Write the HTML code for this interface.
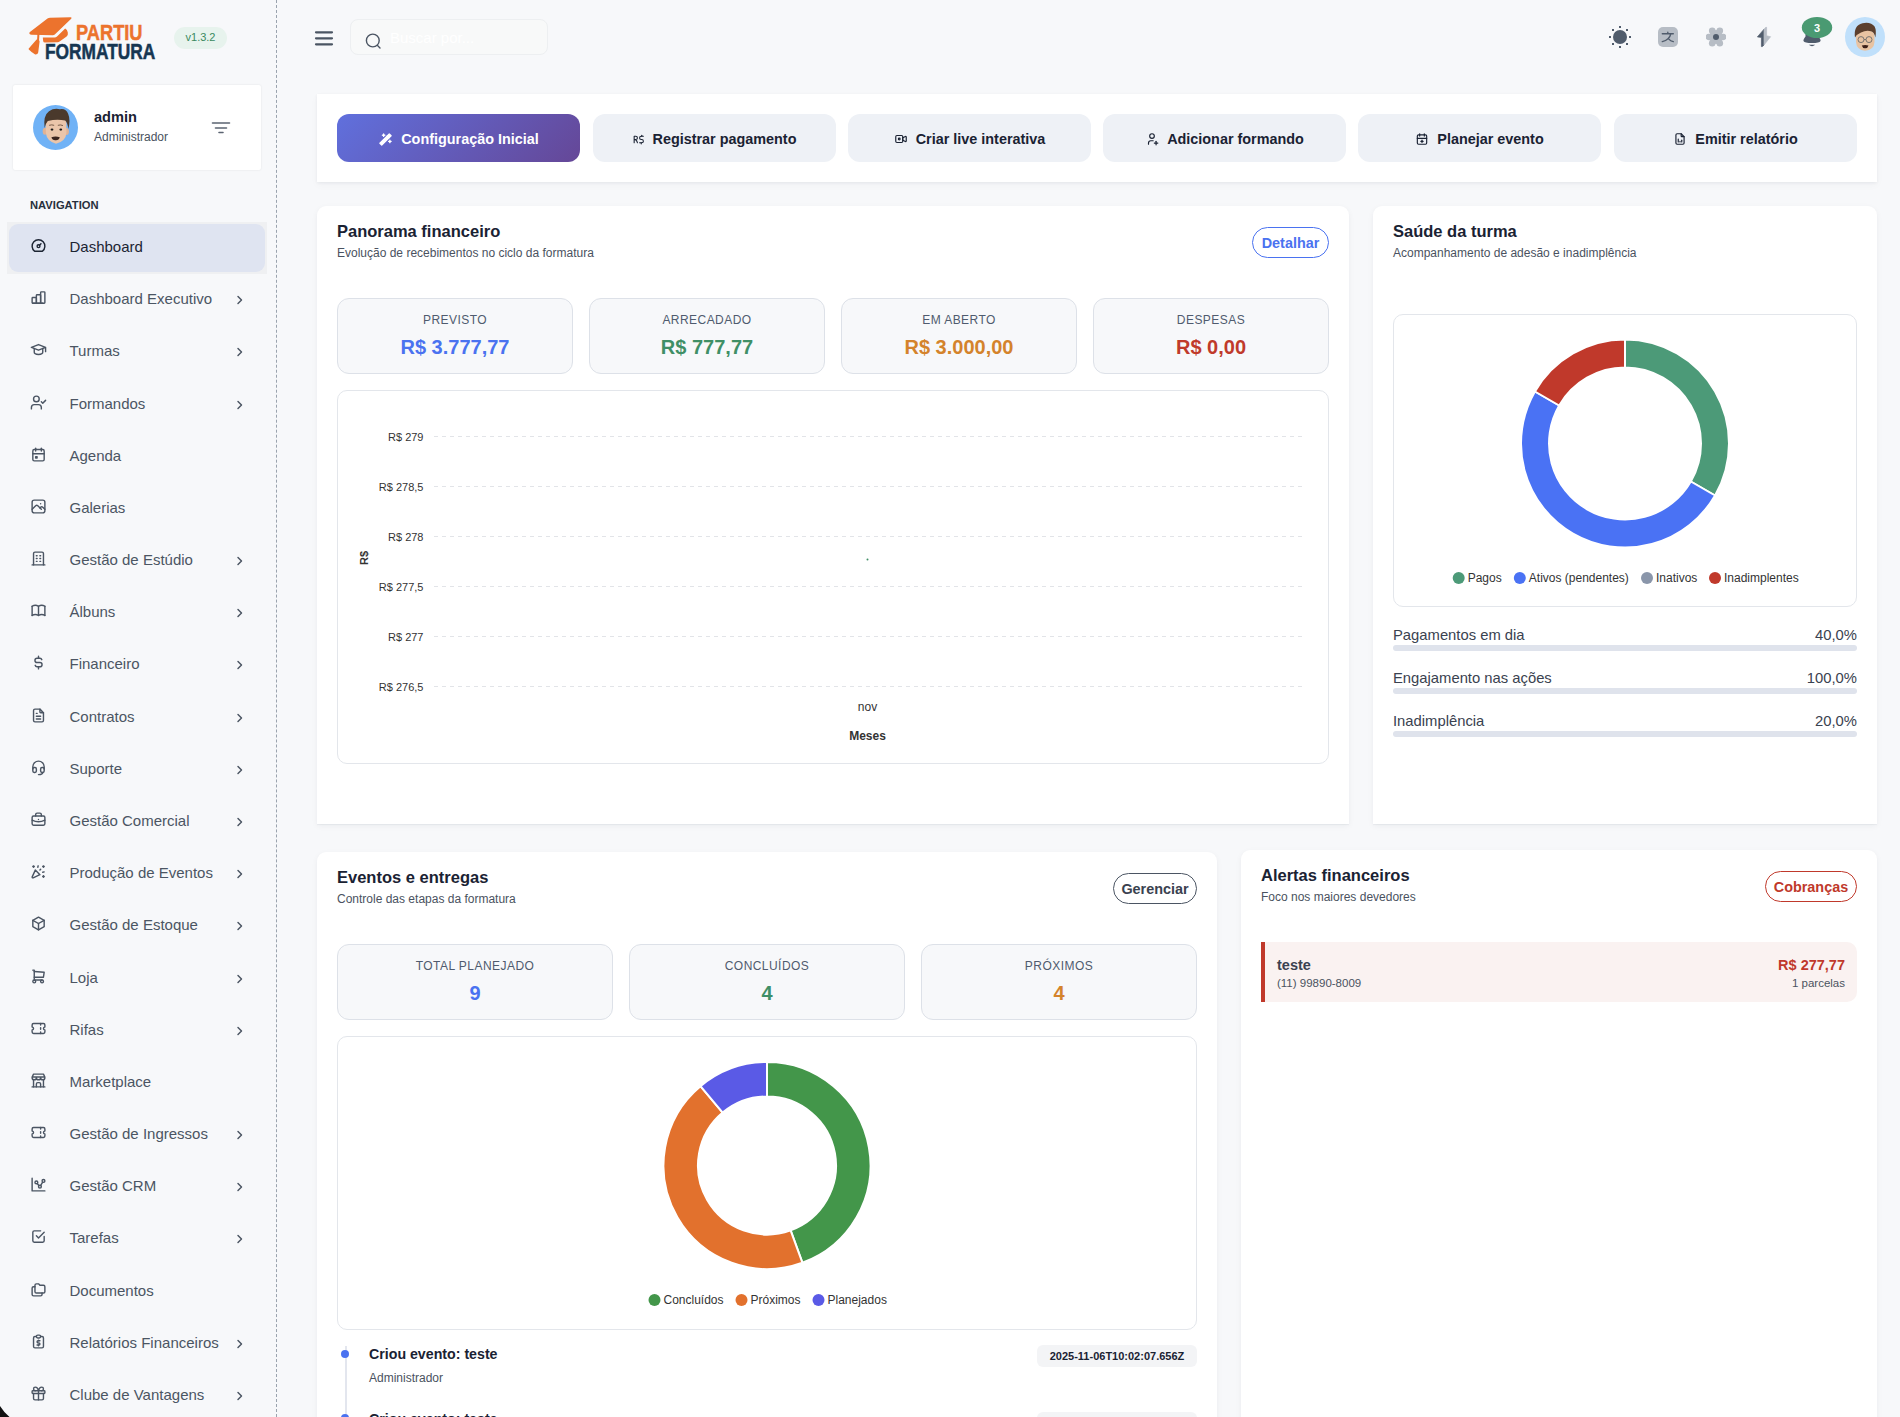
<!DOCTYPE html>
<html lang="pt-BR">
<head>
<meta charset="utf-8">
<title>Partiu Formatura - Dashboard</title>
<style>
*{box-sizing:border-box;margin:0;padding:0}
html,body{width:1900px;height:1417px;overflow:hidden}
body{background:#f7f8fa;font-family:"Liberation Sans",sans-serif;color:#1c2433;position:relative}
.abs{position:absolute}
svg.ic{fill:none;stroke:currentColor;stroke-width:2;stroke-linecap:round;stroke-linejoin:round}
/* sidebar */
#sidebar{position:absolute;left:0;top:0;width:277px;height:1417px;border-right:1px dashed #9aa3ae}
.nav{position:absolute;left:9px;width:256px;height:48px;border-radius:9px;color:#4b5563}
.nav.active{background:#dfe4f1;color:#1c2433}
.nav svg{position:absolute;left:21px;top:13px;width:17px;height:17px}
.nav .t{position:absolute;left:60.5px;top:13px;font-size:15px;line-height:20px;white-space:nowrap}
.nav .chev{position:absolute;left:226px;top:19px;width:10px;height:10px;stroke-width:1.45}
/* cards */
.card{position:absolute;background:#fff;border-radius:9px 9px 0 0;box-shadow:0 1px 1px rgba(20,30,50,.05),0 2px 6px rgba(20,30,50,.05)}
.ttl{position:absolute;font-size:16.5px;font-weight:bold;color:#1a2233;line-height:20px;white-space:nowrap}
.sub{position:absolute;font-size:12px;color:#4a5260;line-height:16px;white-space:nowrap}
.btn{position:absolute;top:20px;height:48px;width:243px;border-radius:12px;background:#eef1f6;color:#1a2233;font-weight:bold;font-size:14.4px;display:flex;align-items:center;justify-content:center;gap:8px;white-space:nowrap;padding-top:2px}
.btn svg{width:14px;height:14px}
.metric{position:absolute;background:#f7f8fa;border:1px solid #dde1e8;border-radius:12px;text-align:center}
.metric .lbl{position:absolute;left:0;right:0;top:13px;font-size:12px;letter-spacing:0.45px;color:#4f5b6e;line-height:16px}
.metric .val{position:absolute;left:0;right:0;top:36px;font-size:20px;font-weight:bold;line-height:24px}
.pill{position:absolute;border:1px solid;border-radius:16px;font-size:14.4px;font-weight:bold;display:flex;align-items:center;justify-content:center}
</style>
</head>
<body>

<!-- SIDEBAR -->
<div id="sidebar">
  <!-- logo -->
  <svg class="abs" style="left:20px;top:10px" width="150" height="55" viewBox="0 0 150 55">
    <path d="M9.6 22.2 L27.5 8.6 Q28.6 7.8 30 7.8 L50.6 7.3 Q52.4 7.4 51.2 8.8 L34.8 24.6 Q34 25.2 32.8 25.2 L11.6 24.8 Q8.6 24.4 9.6 22.2Z" fill="#ec732d"/>
    <path d="M22.8 27.4 L34.6 27.6 Q36 27.6 37 26.6 L45.2 18.6 Q47.4 19.6 47.8 22.4 L47.8 24.6 Q47.6 25.6 46.6 26.4 L39.6 31.6 Q38.8 32.2 37.6 32.2 L25 32.6 Q23.4 32.6 23.2 31.2Z" fill="#ec732d"/>
    <path d="M17.4 24 L19.4 24 L19 31 L17 31Z" fill="#ec732d"/>
    <path d="M16.6 29.6 Q19.4 29 19.6 31.6 L18.2 42.6 Q17.8 44.8 15.2 44.6 Q11 42 8.8 39.6 Q8.2 38.8 9.2 38Z" fill="#ec732d"/>
    <text x="56" y="29.8" font-family="Liberation Sans" font-weight="bold" font-size="22.7" fill="#ec732d" stroke="#ec732d" stroke-width="0.5" textLength="66.5" lengthAdjust="spacingAndGlyphs">PARTIU</text>
    <text x="25" y="48.9" font-family="Liberation Sans" font-weight="bold" font-size="21.2" fill="#163652" stroke="#163652" stroke-width="0.5" textLength="110.3" lengthAdjust="spacingAndGlyphs">FORMATURA</text>
  </svg>
  <div class="abs" style="left:174px;top:27px;width:53px;height:22px;border-radius:11px;background:#e7f3ed;color:#3a8a61;font-size:11px;line-height:20px;text-align:center">v1.3.2</div>

  <!-- user card -->
  <div class="abs" style="left:13px;top:85px;width:248px;height:85px;background:#fff;box-shadow:0 0 2px rgba(30,40,60,.12);border-radius:2px"></div>
  <svg class="abs" style="left:33px;top:105px" width="45" height="45" viewBox="0 0 45 45">
    <circle cx="22.5" cy="22.5" r="22.5" fill="#70b2f6"/>
    <ellipse cx="12" cy="26.2" rx="2.3" ry="3.5" fill="#e0b294"/>
    <ellipse cx="33.6" cy="26.6" rx="2.3" ry="3.5" fill="#e0b294"/>
    <path d="M12.6 18 Q12.6 13.8 17 13.8 L29 13.8 Q33.4 13.8 33.4 18 L33.4 28 Q33 36 23 38.8 Q13.6 36 12.9 28Z" fill="#eac5aa"/>
    <path d="M11.6 23 Q10 10.5 16 6.2 Q21 2.6 27 4.2 Q33 3.2 35.2 9 Q37.6 14.5 35.4 24 Q34.4 17.5 32.2 15.6 Q24 13.8 14.8 16 Q12.6 18.5 11.6 23Z" fill="#4a392c"/>
    <path d="M16.5 20.2 Q18.6 19.4 20.8 20.2M25.2 20.2 Q27.4 19.4 29.6 20.4" stroke="#6a5040" stroke-width="0.9" fill="none" stroke-linecap="round"/>
    <ellipse cx="19" cy="24.6" rx="1.4" ry="1.1" fill="#1a1a1a"/>
    <ellipse cx="27.8" cy="24.6" rx="1.4" ry="1.1" fill="#1a1a1a"/>
    <path d="M18.4 32.2 Q22.6 31 26.8 32.2 Q26 35.4 22.6 35.2 Q19.2 35.4 18.4 32.2Z" fill="#3b2520"/>
  </svg>
  <div class="abs" style="left:94px;top:108px;font-size:14.6px;font-weight:bold;color:#1a2233;line-height:18px">admin</div>
  <div class="abs" style="left:94px;top:129px;font-size:12px;color:#4a5260;line-height:16px">Administrador</div>
  <svg class="abs" style="left:211px;top:121px" width="20" height="13" viewBox="0 0 20 13" stroke="#5b6472" stroke-width="1.6" stroke-linecap="round">
    <path d="M1.5 2h17M4.5 7h11M8 11.5h4"/>
  </svg>

  <div class="abs" style="left:30px;top:198px;font-size:11.2px;font-weight:bold;color:#27303d;line-height:14px">NAVIGATION</div>

  <div class="abs" style="left:7px;top:222px;width:260px;height:52px;background:#eff0f2"></div>
  <div class="nav active" style="top:224.00px"><svg class="ic" viewBox="0 0 24 24"><path d="M12 13m-2 0a2 2 0 1 0 4 0a2 2 0 1 0 -4 0"/><path d="M13.45 11.55l2.05 -2.05"/><path d="M6.4 20a9 9 0 1 1 11.2 0z"/></svg><span class="t">Dashboard</span></div>
<div class="nav" style="top:276.18px"><svg class="ic" viewBox="0 0 24 24"><path d="M3 12m0 1a1 1 0 0 1 1 -1h4a1 1 0 0 1 1 1v6a1 1 0 0 1 -1 1h-4a1 1 0 0 1 -1 -1z"/><path d="M9 8m0 1a1 1 0 0 1 1 -1h4a1 1 0 0 1 1 1v10a1 1 0 0 1 -1 1h-4a1 1 0 0 1 -1 -1z"/><path d="M15 4m0 1a1 1 0 0 1 1 -1h4a1 1 0 0 1 1 1v14a1 1 0 0 1 -1 1h-4a1 1 0 0 1 -1 -1z"/><path d="M4 20l14 0"/></svg><span class="t">Dashboard Executivo</span><svg class="ic chev" viewBox="0 0 10 10"><path d="M3 1.5l3.5 3.5l-3.5 3.5"/></svg></div>
<div class="nav" style="top:328.36px"><svg class="ic" viewBox="0 0 24 24"><path d="M22 9l-10 -4l-10 4l10 4l10 -4v6"/><path d="M6 10.6v5.4a6 3 0 0 0 12 0v-5.4"/></svg><span class="t">Turmas</span><svg class="ic chev" viewBox="0 0 10 10"><path d="M3 1.5l3.5 3.5l-3.5 3.5"/></svg></div>
<div class="nav" style="top:380.54px"><svg class="ic" viewBox="0 0 24 24"><path d="M16 21v-2a4 4 0 0 0-4-4H6a4 4 0 0 0-4 4v2"/><circle cx="9" cy="7" r="4"/><path d="M16 11l2 2l4 -4"/></svg><span class="t">Formandos</span><svg class="ic chev" viewBox="0 0 10 10"><path d="M3 1.5l3.5 3.5l-3.5 3.5"/></svg></div>
<div class="nav" style="top:432.72px"><svg class="ic" viewBox="0 0 24 24"><path d="M4 5m0 2a2 2 0 0 1 2 -2h12a2 2 0 0 1 2 2v12a2 2 0 0 1 -2 2h-12a2 2 0 0 1 -2 -2z"/><path d="M16 3l0 4"/><path d="M8 3l0 4"/><path d="M4 11l16 0"/><path d="M8 15h2v2h-2z"/></svg><span class="t">Agenda</span></div>
<div class="nav" style="top:484.90px"><svg class="ic" viewBox="0 0 24 24"><path d="M15 8h.01"/><path d="M3 6a3 3 0 0 1 3 -3h12a3 3 0 0 1 3 3v12a3 3 0 0 1 -3 3h-12a3 3 0 0 1 -3 -3v-12z"/><path d="M3 16l5 -5c.928 -.893 2.072 -.893 3 0l5 5"/><path d="M14 14l1 -1c.928 -.893 2.072 -.893 3 0l3 3"/></svg><span class="t">Galerias</span></div>
<div class="nav" style="top:537.08px"><svg class="ic" viewBox="0 0 24 24"><path d="M3 21l18 0"/><path d="M9 8l1 0"/><path d="M9 12l1 0"/><path d="M9 16l1 0"/><path d="M14 8l1 0"/><path d="M14 12l1 0"/><path d="M14 16l1 0"/><path d="M5 21v-16a2 2 0 0 1 2 -2h10a2 2 0 0 1 2 2v16"/></svg><span class="t">Gestão de Estúdio</span><svg class="ic chev" viewBox="0 0 10 10"><path d="M3 1.5l3.5 3.5l-3.5 3.5"/></svg></div>
<div class="nav" style="top:589.26px"><svg class="ic" viewBox="0 0 24 24"><path d="M3 19a9 9 0 0 1 9 0a9 9 0 0 1 9 0"/><path d="M3 6a9 9 0 0 1 9 0a9 9 0 0 1 9 0"/><path d="M3 6l0 13"/><path d="M12 6l0 13"/><path d="M21 6l0 13"/></svg><span class="t">Álbuns</span><svg class="ic chev" viewBox="0 0 10 10"><path d="M3 1.5l3.5 3.5l-3.5 3.5"/></svg></div>
<div class="nav" style="top:641.44px"><svg class="ic" viewBox="0 0 24 24"><path d="M16.7 8a3 3 0 0 0 -2.7 -2h-4a3 3 0 0 0 0 6h4a3 3 0 0 1 0 6h-4a3 3 0 0 1 -2.7 -2"/><path d="M12 3v3m0 12v3"/></svg><span class="t">Financeiro</span><svg class="ic chev" viewBox="0 0 10 10"><path d="M3 1.5l3.5 3.5l-3.5 3.5"/></svg></div>
<div class="nav" style="top:693.62px"><svg class="ic" viewBox="0 0 24 24"><path d="M14 3v4a1 1 0 0 0 1 1h4"/><path d="M17 21h-10a2 2 0 0 1 -2 -2v-14a2 2 0 0 1 2 -2h7l5 5v11a2 2 0 0 1 -2 2z"/><path d="M9 9l1 0"/><path d="M9 13l6 0"/><path d="M9 17l6 0"/></svg><span class="t">Contratos</span><svg class="ic chev" viewBox="0 0 10 10"><path d="M3 1.5l3.5 3.5l-3.5 3.5"/></svg></div>
<div class="nav" style="top:745.80px"><svg class="ic" viewBox="0 0 24 24"><path d="M4 14v-3a8 8 0 1 1 16 0v3"/><path d="M18 19c0 1.657 -2.686 3 -6 3"/><path d="M4 14a2 2 0 0 1 2 -2h1a2 2 0 0 1 2 2v3a2 2 0 0 1 -2 2h-1a2 2 0 0 1 -2 -2v-3z"/><path d="M15 14a2 2 0 0 1 2 -2h1a2 2 0 0 1 2 2v3a2 2 0 0 1 -2 2h-1a2 2 0 0 1 -2 -2v-3z"/></svg><span class="t">Suporte</span><svg class="ic chev" viewBox="0 0 10 10"><path d="M3 1.5l3.5 3.5l-3.5 3.5"/></svg></div>
<div class="nav" style="top:797.98px"><svg class="ic" viewBox="0 0 24 24"><path d="M3 7m0 2a2 2 0 0 1 2 -2h14a2 2 0 0 1 2 2v9a2 2 0 0 1 -2 2h-14a2 2 0 0 1 -2 -2z"/><path d="M8 7v-2a2 2 0 0 1 2 -2h4a2 2 0 0 1 2 2v2"/><path d="M12 12l0 .01"/><path d="M3 13a20 20 0 0 0 18 0"/></svg><span class="t">Gestão Comercial</span><svg class="ic chev" viewBox="0 0 10 10"><path d="M3 1.5l3.5 3.5l-3.5 3.5"/></svg></div>
<div class="nav" style="top:850.16px"><svg class="ic" viewBox="0 0 24 24"><path d="M4 5h2"/><path d="M5 4v2"/><path d="M11.5 4l-.5 2"/><path d="M18 5h2"/><path d="M19 4v2"/><path d="M15 9l-1 1"/><path d="M18 13l2 -.5"/><path d="M18 19h2"/><path d="M19 18v2"/><path d="M14 16.518l-6.518 -6.518l-4.39 9.58a1 1 0 0 0 1.329 1.329l9.579 -4.39z"/></svg><span class="t">Produção de Eventos</span><svg class="ic chev" viewBox="0 0 10 10"><path d="M3 1.5l3.5 3.5l-3.5 3.5"/></svg></div>
<div class="nav" style="top:902.34px"><svg class="ic" viewBox="0 0 24 24"><path d="M12 3l8 4.5l0 9l-8 4.5l-8 -4.5l0 -9l8 -4.5"/><path d="M12 12l8 -4.5"/><path d="M12 12l0 9"/><path d="M12 12l-8 -4.5"/></svg><span class="t">Gestão de Estoque</span><svg class="ic chev" viewBox="0 0 10 10"><path d="M3 1.5l3.5 3.5l-3.5 3.5"/></svg></div>
<div class="nav" style="top:954.52px"><svg class="ic" viewBox="0 0 24 24"><path d="M6 19m-2 0a2 2 0 1 0 4 0a2 2 0 1 0 -4 0"/><path d="M17 19m-2 0a2 2 0 1 0 4 0a2 2 0 1 0 -4 0"/><path d="M17 17h-11v-14h-2"/><path d="M6 5l14 1l-1 7h-13"/></svg><span class="t">Loja</span><svg class="ic chev" viewBox="0 0 10 10"><path d="M3 1.5l3.5 3.5l-3.5 3.5"/></svg></div>
<div class="nav" style="top:1006.70px"><svg class="ic" viewBox="0 0 24 24"><path d="M15 5l0 2"/><path d="M15 11l0 2"/><path d="M15 17l0 2"/><path d="M5 5h14a2 2 0 0 1 2 2v3a2 2 0 0 0 0 4v3a2 2 0 0 1 -2 2h-14a2 2 0 0 1 -2 -2v-3a2 2 0 0 0 0 -4v-3a2 2 0 0 1 2 -2"/></svg><span class="t">Rifas</span><svg class="ic chev" viewBox="0 0 10 10"><path d="M3 1.5l3.5 3.5l-3.5 3.5"/></svg></div>
<div class="nav" style="top:1058.88px"><svg class="ic" viewBox="0 0 24 24"><path d="M3 21l18 0"/><path d="M3 7v1a3 3 0 0 0 6 0v-1m0 1a3 3 0 0 0 6 0v-1m0 1a3 3 0 0 0 6 0v-1h-18l2 -4h14l2 4"/><path d="M5 21l0 -10.15"/><path d="M19 21l0 -10.15"/><path d="M9 21v-4a2 2 0 0 1 2 -2h2a2 2 0 0 1 2 2v4"/></svg><span class="t">Marketplace</span></div>
<div class="nav" style="top:1111.06px"><svg class="ic" viewBox="0 0 24 24"><path d="M15 5l0 2"/><path d="M15 11l0 2"/><path d="M15 17l0 2"/><path d="M5 5h14a2 2 0 0 1 2 2v3a2 2 0 0 0 0 4v3a2 2 0 0 1 -2 2h-14a2 2 0 0 1 -2 -2v-3a2 2 0 0 0 0 -4v-3a2 2 0 0 1 2 -2"/></svg><span class="t">Gestão de Ingressos</span><svg class="ic chev" viewBox="0 0 10 10"><path d="M3 1.5l3.5 3.5l-3.5 3.5"/></svg></div>
<div class="nav" style="top:1163.24px"><svg class="ic" viewBox="0 0 24 24"><path d="M3 3v18h18"/><path d="M9 9m-2 0a2 2 0 1 0 4 0a2 2 0 1 0 -4 0"/><path d="M19 7m-2 0a2 2 0 1 0 4 0a2 2 0 1 0 -4 0"/><path d="M14 15m-2 0a2 2 0 1 0 4 0a2 2 0 1 0 -4 0"/><path d="M10.16 10.62l2.34 2.88"/><path d="M15.088 13.328l2.837 -4.586"/></svg><span class="t">Gestão CRM</span><svg class="ic chev" viewBox="0 0 10 10"><path d="M3 1.5l3.5 3.5l-3.5 3.5"/></svg></div>
<div class="nav" style="top:1215.42px"><svg class="ic" viewBox="0 0 24 24"><path d="M9 11l3 3l8 -8"/><path d="M20 12v6a2 2 0 0 1 -2 2h-12a2 2 0 0 1 -2 -2v-12a2 2 0 0 1 2 -2h9"/></svg><span class="t">Tarefas</span><svg class="ic chev" viewBox="0 0 10 10"><path d="M3 1.5l3.5 3.5l-3.5 3.5"/></svg></div>
<div class="nav" style="top:1267.60px"><svg class="ic" viewBox="0 0 24 24"><path d="M9 4h3l2 2h5a2 2 0 0 1 2 2v7a2 2 0 0 1 -2 2h-10a2 2 0 0 1 -2 -2v-9a2 2 0 0 1 2 -2"/><path d="M17 17v2a2 2 0 0 1 -2 2h-10a2 2 0 0 1 -2 -2v-9a2 2 0 0 1 2 -2h2"/></svg><span class="t">Documentos</span></div>
<div class="nav" style="top:1319.78px"><svg class="ic" viewBox="0 0 24 24"><path d="M9 5h-2a2 2 0 0 0 -2 2v12a2 2 0 0 0 2 2h10a2 2 0 0 0 2 -2v-12a2 2 0 0 0 -2 -2h-2"/><path d="M9 3m0 2a2 2 0 0 1 2 -2h2a2 2 0 0 1 2 2v0a2 2 0 0 1 -2 2h-2a2 2 0 0 1 -2 -2z"/><path d="M14 11h-2.5a1.5 1.5 0 0 0 0 3h1a1.5 1.5 0 0 1 0 3h-2.5"/><path d="M12 17v1m0 -8v1"/></svg><span class="t">Relatórios Financeiros</span><svg class="ic chev" viewBox="0 0 10 10"><path d="M3 1.5l3.5 3.5l-3.5 3.5"/></svg></div>
<div class="nav" style="top:1371.96px"><svg class="ic" viewBox="0 0 24 24"><path d="M3 8m0 1a1 1 0 0 1 1 -1h16a1 1 0 0 1 1 1v2a1 1 0 0 1 -1 1h-16a1 1 0 0 1 -1 -1z"/><path d="M12 8l0 13"/><path d="M19 12v7a2 2 0 0 1 -2 2h-10a2 2 0 0 1 -2 -2v-7"/><path d="M7.5 8a2.5 2.5 0 0 1 0 -5a4.8 8 0 0 1 4.5 5a4.8 8 0 0 1 4.5 -5a2.5 2.5 0 0 1 0 5"/></svg><span class="t">Clube de Vantagens</span><svg class="ic chev" viewBox="0 0 10 10"><path d="M3 1.5l3.5 3.5l-3.5 3.5"/></svg></div>
</div>

<!-- HEADER -->
<svg class="abs" style="left:314px;top:30px" width="20" height="17" viewBox="0 0 20 17" stroke="#4b5563" stroke-width="2.2" stroke-linecap="round"><path d="M2 2.3h16M2 8.3h16M2 14.3h16"/></svg>
<div class="abs" style="left:350px;top:19px;width:198px;height:36px;border-radius:8px;background:#f8f9f9;border:1px solid #edeff1"></div>
<svg class="abs" style="left:363px;top:31px" width="20" height="20" viewBox="0 0 20 20" fill="none" stroke="#4b5563" stroke-width="1.4" stroke-linecap="round"><circle cx="9.8" cy="9.5" r="6.4"/><path d="M14.5 14.5l2.5 2.5"/></svg>
<div class="abs" style="left:390px;top:29px;font-size:15px;color:#ffffff;line-height:18px">Buscar por...</div>

<!-- header icons -->
<svg class="abs" style="left:1605px;top:22px" width="30" height="30" viewBox="0 0 30 30">
  <circle cx="15" cy="15" r="7" fill="#505c6c"/>
  <g fill="#505c6c"><rect x="14" y="4" width="2" height="2"/><rect x="14" y="24" width="2" height="2"/><rect x="4" y="14" width="2" height="2"/><rect x="24" y="14" width="2" height="2"/><rect x="7" y="7" width="2" height="2"/><rect x="21" y="7" width="2" height="2"/><rect x="7" y="21" width="2" height="2"/><rect x="21" y="21" width="2" height="2"/></g>
</svg>
<svg class="abs" style="left:1658px;top:27px" width="20" height="20" viewBox="0 0 20 20">
  <rect x="0" y="0" width="20" height="20" rx="5" fill="#b7bdc5"/>
  <path d="M4.3 6.8H15.3M9.8 5.3V6.8M12.6 7.3Q11.6 12.6 4.3 14.6M10.9 12.2Q12.4 14.2 15.3 14.6" stroke="#505c6c" stroke-width="1.4" fill="none" stroke-linecap="round"/>
</svg>
<svg class="abs" style="left:1706px;top:27px" width="20" height="20" viewBox="0 0 20 20">
  <g fill="#b7bdc5"><circle cx="6.2" cy="3.8" r="3.3"/><circle cx="13.8" cy="3.8" r="3.3"/><circle cx="6.2" cy="16.2" r="3.3"/><circle cx="13.8" cy="16.2" r="3.3"/><circle cx="2.8" cy="10" r="3.2"/><circle cx="17.2" cy="10" r="3.2"/><circle cx="10" cy="10" r="7"/></g>
  <circle cx="10" cy="10" r="3" fill="#505c6c"/>
</svg>
<svg class="abs" style="left:1745px;top:17px" width="35" height="40" viewBox="1745 17 35 40">
  <path d="M1764 29.2 L1757.4 36.9 L1761.4 37.4 L1761.4 46.6 L1762.4 46.6 L1764 45Z" fill="#505c6c" stroke="#505c6c" stroke-width="0.7" stroke-linejoin="round"/>
  <path d="M1764 29.2 L1766 27.1 L1766.6 27.4 L1766.6 35.8 L1770.6 36.7 L1764 45Z" fill="#b7bdc5" stroke="#b7bdc5" stroke-width="0.7" stroke-linejoin="round"/>
</svg>
<svg class="abs" style="left:1800px;top:15px" width="36" height="34" viewBox="1800 15 36 34">
  <path d="M1805.5 30 L1805.5 36.5 Q1803 39.5 1803.5 41 Q1804.5 43 1812 43 Q1819.5 43 1820.5 41 Q1821 39.5 1818.5 36.5 L1818.5 30Z" fill="#505c6c"/>
  <path d="M1808.8 44.8 Q1812 47.6 1815.2 44.8Z" fill="#505c6c"/>
  <ellipse cx="1817" cy="27.5" rx="15.2" ry="10.5" fill="#4a9a72"/>
  <text x="1817" y="31.5" text-anchor="middle" font-family="Liberation Sans" font-size="11" font-weight="bold" fill="#fff">3</text>
</svg>
<svg class="abs" style="left:1845px;top:17px" width="40" height="40" viewBox="0 0 40 40">
  <circle cx="20" cy="20" r="20" fill="#c0e0fb"/>
  <path d="M11 19 Q11 13 20 13 Q29.5 13 29.5 19 L29.5 25 Q29 33 20 33.8 Q11.5 33 11 25Z" fill="#e8c3a2"/>
  <path d="M10 20.5 Q8.2 8.5 17.5 6.2 Q26 4.6 29.6 9.6 Q31.6 13.5 30.4 20.5 Q29.4 15.2 26 14.2 Q21 13 16 15.4 Q12 17 10 20.5Z" fill="#5b3f2e"/>
  <g fill="none" stroke="#6b6b6b" stroke-width="0.9"><circle cx="16" cy="22.6" r="3"/><circle cx="24" cy="22.6" r="3"/><path d="M19 22.6h2"/></g>
  <path d="M16.8 28.4 Q20.2 27.6 23.5 28.4 Q22.6 31.4 20.2 31.2 Q17.6 31.4 16.8 28.4Z" fill="#3b1f18"/>
</svg>

<!-- ACTION BAR -->
<div class="abs" style="left:317px;top:94px;width:1560px;height:88px;background:#fff;box-shadow:0 1px 3px rgba(20,30,50,.06),0 3px 8px rgba(20,30,50,.03)">
  <div class="btn" style="left:20px;background:linear-gradient(135deg,#6070dd 0%,#654797 100%);color:#fff">
    <svg class="ic" viewBox="0 0 24 24" style="stroke:#fff;width:15px;height:15px"><path d="M6 21l15 -15l-3 -3l-15 15l3 3" fill="#fff"/><path d="M15 6l3 3"/><path d="M9 3a2 2 0 0 0 2 2a2 2 0 0 0 -2 2a2 2 0 0 0 -2 -2a2 2 0 0 0 2 -2" fill="#fff"/><path d="M19 13a2 2 0 0 0 2 2a2 2 0 0 0 -2 2a2 2 0 0 0 -2 -2a2 2 0 0 0 2 -2" fill="#fff"/></svg>
    <span>Configuração Inicial</span></div>
  <div class="btn" style="left:275.5px"><svg class="ic" viewBox="0 0 24 24" style="width:13px;height:13px"><path d="M21 6h-4a3 3 0 0 0 0 6h1a3 3 0 0 1 0 6h-4"/><path d="M4 18v-12h3a3 3 0 1 1 0 6h-3c5.5 0 5 4 6 6"/><path d="M18 6v-2"/><path d="M17 20v-2"/></svg><span>Registrar pagamento</span></div>
  <div class="btn" style="left:531px"><svg class="ic" viewBox="0 0 24 24"><path d="M15 10l4.553 -2.276a1 1 0 0 1 1.447 .894v6.764a1 1 0 0 1 -1.447 .894l-4.553 -2.276v-4z"/><path d="M3 6m0 2a2 2 0 0 1 2 -2h8a2 2 0 0 1 2 2v8a2 2 0 0 1 -2 2h-8a2 2 0 0 1 -2 -2z"/><circle cx="9" cy="12" r="1.5"/></svg><span>Criar live interativa</span></div>
  <div class="btn" style="left:786px"><svg class="ic" viewBox="0 0 24 24"><path d="M8 7a4 4 0 1 0 8 0a4 4 0 0 0 -8 0"/><path d="M16 19h6"/><path d="M19 16v6"/><path d="M6 21v-2a4 4 0 0 1 4 -4h4"/></svg><span>Adicionar formando</span></div>
  <div class="btn" style="left:1041px"><svg class="ic" viewBox="0 0 24 24"><path d="M4 5m0 2a2 2 0 0 1 2 -2h12a2 2 0 0 1 2 2v12a2 2 0 0 1 -2 2h-12a2 2 0 0 1 -2 -2z"/><path d="M16 3l0 4"/><path d="M8 3l0 4"/><path d="M4 11l16 0"/><path d="M10 16h4"/><path d="M12 14v4"/></svg><span>Planejar evento</span></div>
  <div class="btn" style="left:1297px"><svg class="ic" viewBox="0 0 24 24"><path d="M14 3v4a1 1 0 0 0 1 1h4"/><path d="M17 21h-10a2 2 0 0 1 -2 -2v-14a2 2 0 0 1 2 -2h7l5 5v11a2 2 0 0 1 -2 2z"/><path d="M9 17v-5"/><path d="M12 17v-1"/><path d="M15 17v-3"/></svg><span>Emitir relatório</span></div>
</div>

<!-- PANORAMA -->
<div class="card" style="left:317px;top:206px;width:1032px;height:618px"></div>
<div class="ttl" style="left:337px;top:221px">Panorama financeiro</div>
<div class="sub" style="left:337px;top:245px">Evolução de recebimentos no ciclo da formatura</div>
<div class="pill" style="left:1252px;top:227px;width:77px;height:31px;border-color:#4a72f0;color:#4a72f0;font-weight:bold">Detalhar</div>

<div class="metric" style="left:337px;top:298px;width:236px;height:76px"><div class="lbl">PREVISTO</div><div class="val" style="color:#4a72f0">R$ 3.777,77</div></div>
<div class="metric" style="left:589px;top:298px;width:236px;height:76px"><div class="lbl">ARRECADADO</div><div class="val" style="color:#3f8f66">R$ 777,77</div></div>
<div class="metric" style="left:841px;top:298px;width:236px;height:76px"><div class="lbl">EM ABERTO</div><div class="val" style="color:#d4832b">R$ 3.000,00</div></div>
<div class="metric" style="left:1093px;top:298px;width:236px;height:76px"><div class="lbl">DESPESAS</div><div class="val" style="color:#c03a2b">R$ 0,00</div></div>

<div class="abs" style="left:337px;top:390px;width:992px;height:374px;border:1px solid #e3e6eb;border-radius:10px;background:#fff"></div>
<svg class="abs" style="left:337px;top:390px" width="992" height="374" viewBox="337 390 992 374" font-family="Liberation Sans">
  <g stroke="#e2e4e8" stroke-width="1" stroke-dasharray="4 4">
    <path d="M434 436.5H1302M434 486.5H1302M434 536.5H1302M434 586.5H1302M434 636.5H1302M434 686.5H1302"/>
  </g>
  <g font-size="11" fill="#333" text-anchor="end">
    <text x="423.5" y="440.5">R$ 279</text>
    <text x="423.5" y="490.5">R$ 278,5</text>
    <text x="423.5" y="540.5">R$ 278</text>
    <text x="423.5" y="590.5">R$ 277,5</text>
    <text x="423.5" y="640.5">R$ 277</text>
    <text x="423.5" y="690.5">R$ 276,5</text>
  </g>
  <text transform="translate(368,558) rotate(-90)" text-anchor="middle" font-size="11" font-weight="bold" fill="#333">R$</text>
  <text x="867.5" y="710.5" text-anchor="middle" font-size="12" fill="#333">nov</text>
  <text x="867.5" y="740" text-anchor="middle" font-size="12" font-weight="bold" fill="#333">Meses</text>
  <circle cx="867.5" cy="559.5" r="1" fill="#3f8f66"/>
</svg>

<!-- SAUDE -->
<div class="card" style="left:1373px;top:206px;width:504px;height:618px"></div>
<div class="ttl" style="left:1393px;top:221px">Saúde da turma</div>
<div class="sub" style="left:1393px;top:245px">Acompanhamento de adesão e inadimplência</div>
<div class="abs" style="left:1393px;top:314px;width:464px;height:293px;border:1px solid #e3e6eb;border-radius:10px;background:#fff"></div>

<div class="abs" style="left:1393px;top:626px;font-size:14.8px;color:#3a4250;line-height:18px">Pagamentos em dia</div>
<div class="abs" style="left:1393px;top:626px;width:464px;text-align:right;font-size:14.8px;color:#3a4250;line-height:18px">40,0%</div>
<div class="abs" style="left:1393px;top:645px;width:464px;height:6px;border-radius:3px;background:#dfe3ec"></div>
<div class="abs" style="left:1393px;top:669px;font-size:14.8px;color:#3a4250;line-height:18px">Engajamento nas ações</div>
<div class="abs" style="left:1393px;top:669px;width:464px;text-align:right;font-size:14.8px;color:#3a4250;line-height:18px">100,0%</div>
<div class="abs" style="left:1393px;top:688px;width:464px;height:6px;border-radius:3px;background:#dfe3ec"></div>
<div class="abs" style="left:1393px;top:712px;font-size:14.8px;color:#3a4250;line-height:18px">Inadimplência</div>
<div class="abs" style="left:1393px;top:712px;width:464px;text-align:right;font-size:14.8px;color:#3a4250;line-height:18px">20,0%</div>
<div class="abs" style="left:1393px;top:731px;width:464px;height:6px;border-radius:3px;background:#dfe3ec"></div>

<!-- EVENTOS -->
<div class="card" style="left:317px;top:852px;width:900px;height:600px"></div>
<div class="ttl" style="left:337px;top:867px">Eventos e entregas</div>
<div class="sub" style="left:337px;top:891px">Controle das etapas da formatura</div>
<div class="pill" style="left:1113px;top:873px;width:84px;height:31px;border-color:#4b5563;color:#3a4250">Gerenciar</div>

<div class="metric" style="left:337px;top:944px;width:276px;height:76px"><div class="lbl">TOTAL PLANEJADO</div><div class="val" style="color:#4a72f0">9</div></div>
<div class="metric" style="left:629px;top:944px;width:276px;height:76px"><div class="lbl">CONCLUÍDOS</div><div class="val" style="color:#3f8f66">4</div></div>
<div class="metric" style="left:921px;top:944px;width:276px;height:76px"><div class="lbl">PRÓXIMOS</div><div class="val" style="color:#d4832b">4</div></div>

<div class="abs" style="left:337px;top:1036px;width:860px;height:294px;border:1px solid #e3e6eb;border-radius:10px;background:#fff"></div>

<!-- timeline -->
<div class="abs" style="left:345px;top:1346px;width:2px;height:80px;background:#e3e6ee"></div>
<div class="abs" style="left:341px;top:1350px;width:8px;height:8px;border-radius:50%;background:#4a72f0"></div>
<div class="abs" style="left:369px;top:1345px;font-size:14.2px;font-weight:bold;color:#1a2233;line-height:18px">Criou evento: teste</div>
<div class="abs" style="left:369px;top:1370px;font-size:12px;color:#4a5260;line-height:16px">Administrador</div>
<div class="abs" style="left:1037px;top:1345px;width:160px;height:22px;border-radius:6px;background:#f3f4f6;font-size:11px;font-weight:bold;color:#1a2233;line-height:22px;text-align:center">2025-11-06T10:02:07.656Z</div>
<div class="abs" style="left:341px;top:1414px;width:8px;height:8px;border-radius:50%;background:#4a72f0"></div>
<div class="abs" style="left:369px;top:1410px;font-size:14.2px;font-weight:bold;color:#1a2233;line-height:18px">Criou evento: teste</div>
<div class="abs" style="left:1037px;top:1412px;width:160px;height:22px;border-radius:6px;background:#f3f4f6"></div>

<!-- ALERTAS -->
<div class="card" style="left:1241px;top:850px;width:636px;height:600px"></div>
<div class="ttl" style="left:1261px;top:865px">Alertas financeiros</div>
<div class="sub" style="left:1261px;top:889px">Foco nos maiores devedores</div>
<div class="pill" style="left:1765px;top:871px;width:92px;height:31px;border-color:#c0392b;color:#c0392b">Cobranças</div>
<div class="abs" style="left:1261px;top:942px;width:596px;height:60px;border-radius:0 10px 10px 0;background:#faf2f1;border-left:4px solid #c0392b"></div>
<div class="abs" style="left:1277px;top:956px;font-size:14.5px;font-weight:bold;color:#3a4250;line-height:18px">teste</div>
<div class="abs" style="left:1277px;top:976px;font-size:11.5px;color:#4a5260;line-height:14px">(11) 99890-8009</div>
<div class="abs" style="left:1645px;top:956px;width:200px;text-align:right;font-size:14.5px;font-weight:bold;color:#c0392b;line-height:18px">R$ 277,77</div>
<div class="abs" style="left:1645px;top:976px;width:200px;text-align:right;font-size:11.5px;color:#4a5260;line-height:14px">1 parcelas</div>

<!-- corner -->
<svg class="abs" style="left:0;top:1380px" width="40" height="37" viewBox="0 0 40 37"><path d="M0 26 Q3.5 31.8 9.5 37 L0 37Z" fill="#111"/></svg>

<svg class="abs" style="left:0;top:0" width="1900" height="1417" viewBox="0 0 1900 1417" font-family="Liberation Sans"><path d="M1625.00 339.50 A104 104 0 0 1 1715.07 495.50 L1690.82 481.50 A76 76 0 0 0 1625.00 367.50Z" fill="#4c9a78" stroke="#fff" stroke-width="2"/><path d="M1715.07 495.50 A104 104 0 0 1 1534.93 391.50 L1559.18 405.50 A76 76 0 0 0 1690.82 481.50Z" fill="#4a72f4" stroke="#fff" stroke-width="2"/><path d="M1534.93 391.50 A104 104 0 0 1 1625.00 339.50 L1625.00 367.50 A76 76 0 0 0 1559.18 405.50Z" fill="#c0392b" stroke="#fff" stroke-width="2"/><circle cx="1458.7" cy="578" r="6" fill="#4c9a78"/><text x="1467.7" y="582" font-size="12" fill="#333">Pagos</text><circle cx="1519.8" cy="578" r="6" fill="#4a72f4"/><text x="1528.8" y="582" font-size="12" fill="#333">Ativos (pendentes)</text><circle cx="1647" cy="578" r="6" fill="#8a96aa"/><text x="1656" y="582" font-size="12" fill="#333">Inativos</text><circle cx="1715" cy="578" r="6" fill="#c0392b"/><text x="1724" y="582" font-size="12" fill="#333">Inadimplentes</text><path d="M767.00 1062.00 A103.5 103.5 0 0 1 802.40 1262.76 L790.60 1230.34 A69 69 0 0 0 767.00 1096.50Z" fill="#43964a" stroke="#fff" stroke-width="2"/><path d="M802.40 1262.76 A103.5 103.5 0 0 1 700.47 1086.21 L722.65 1112.64 A69 69 0 0 0 790.60 1230.34Z" fill="#e2712d" stroke="#fff" stroke-width="2"/><path d="M700.47 1086.21 A103.5 103.5 0 0 1 767.00 1062.00 L767.00 1096.50 A69 69 0 0 0 722.65 1112.64Z" fill="#5a5ae6" stroke="#fff" stroke-width="2"/><circle cx="654.5" cy="1300" r="6" fill="#43964a"/><text x="663.5" y="1304" font-size="12" fill="#333">Concluídos</text><circle cx="741.5" cy="1300" r="6" fill="#e2712d"/><text x="750.5" y="1304" font-size="12" fill="#333">Próximos</text><circle cx="818.5" cy="1300" r="6" fill="#5a5ae6"/><text x="827.5" y="1304" font-size="12" fill="#333">Planejados</text></svg>
</body>
</html>
